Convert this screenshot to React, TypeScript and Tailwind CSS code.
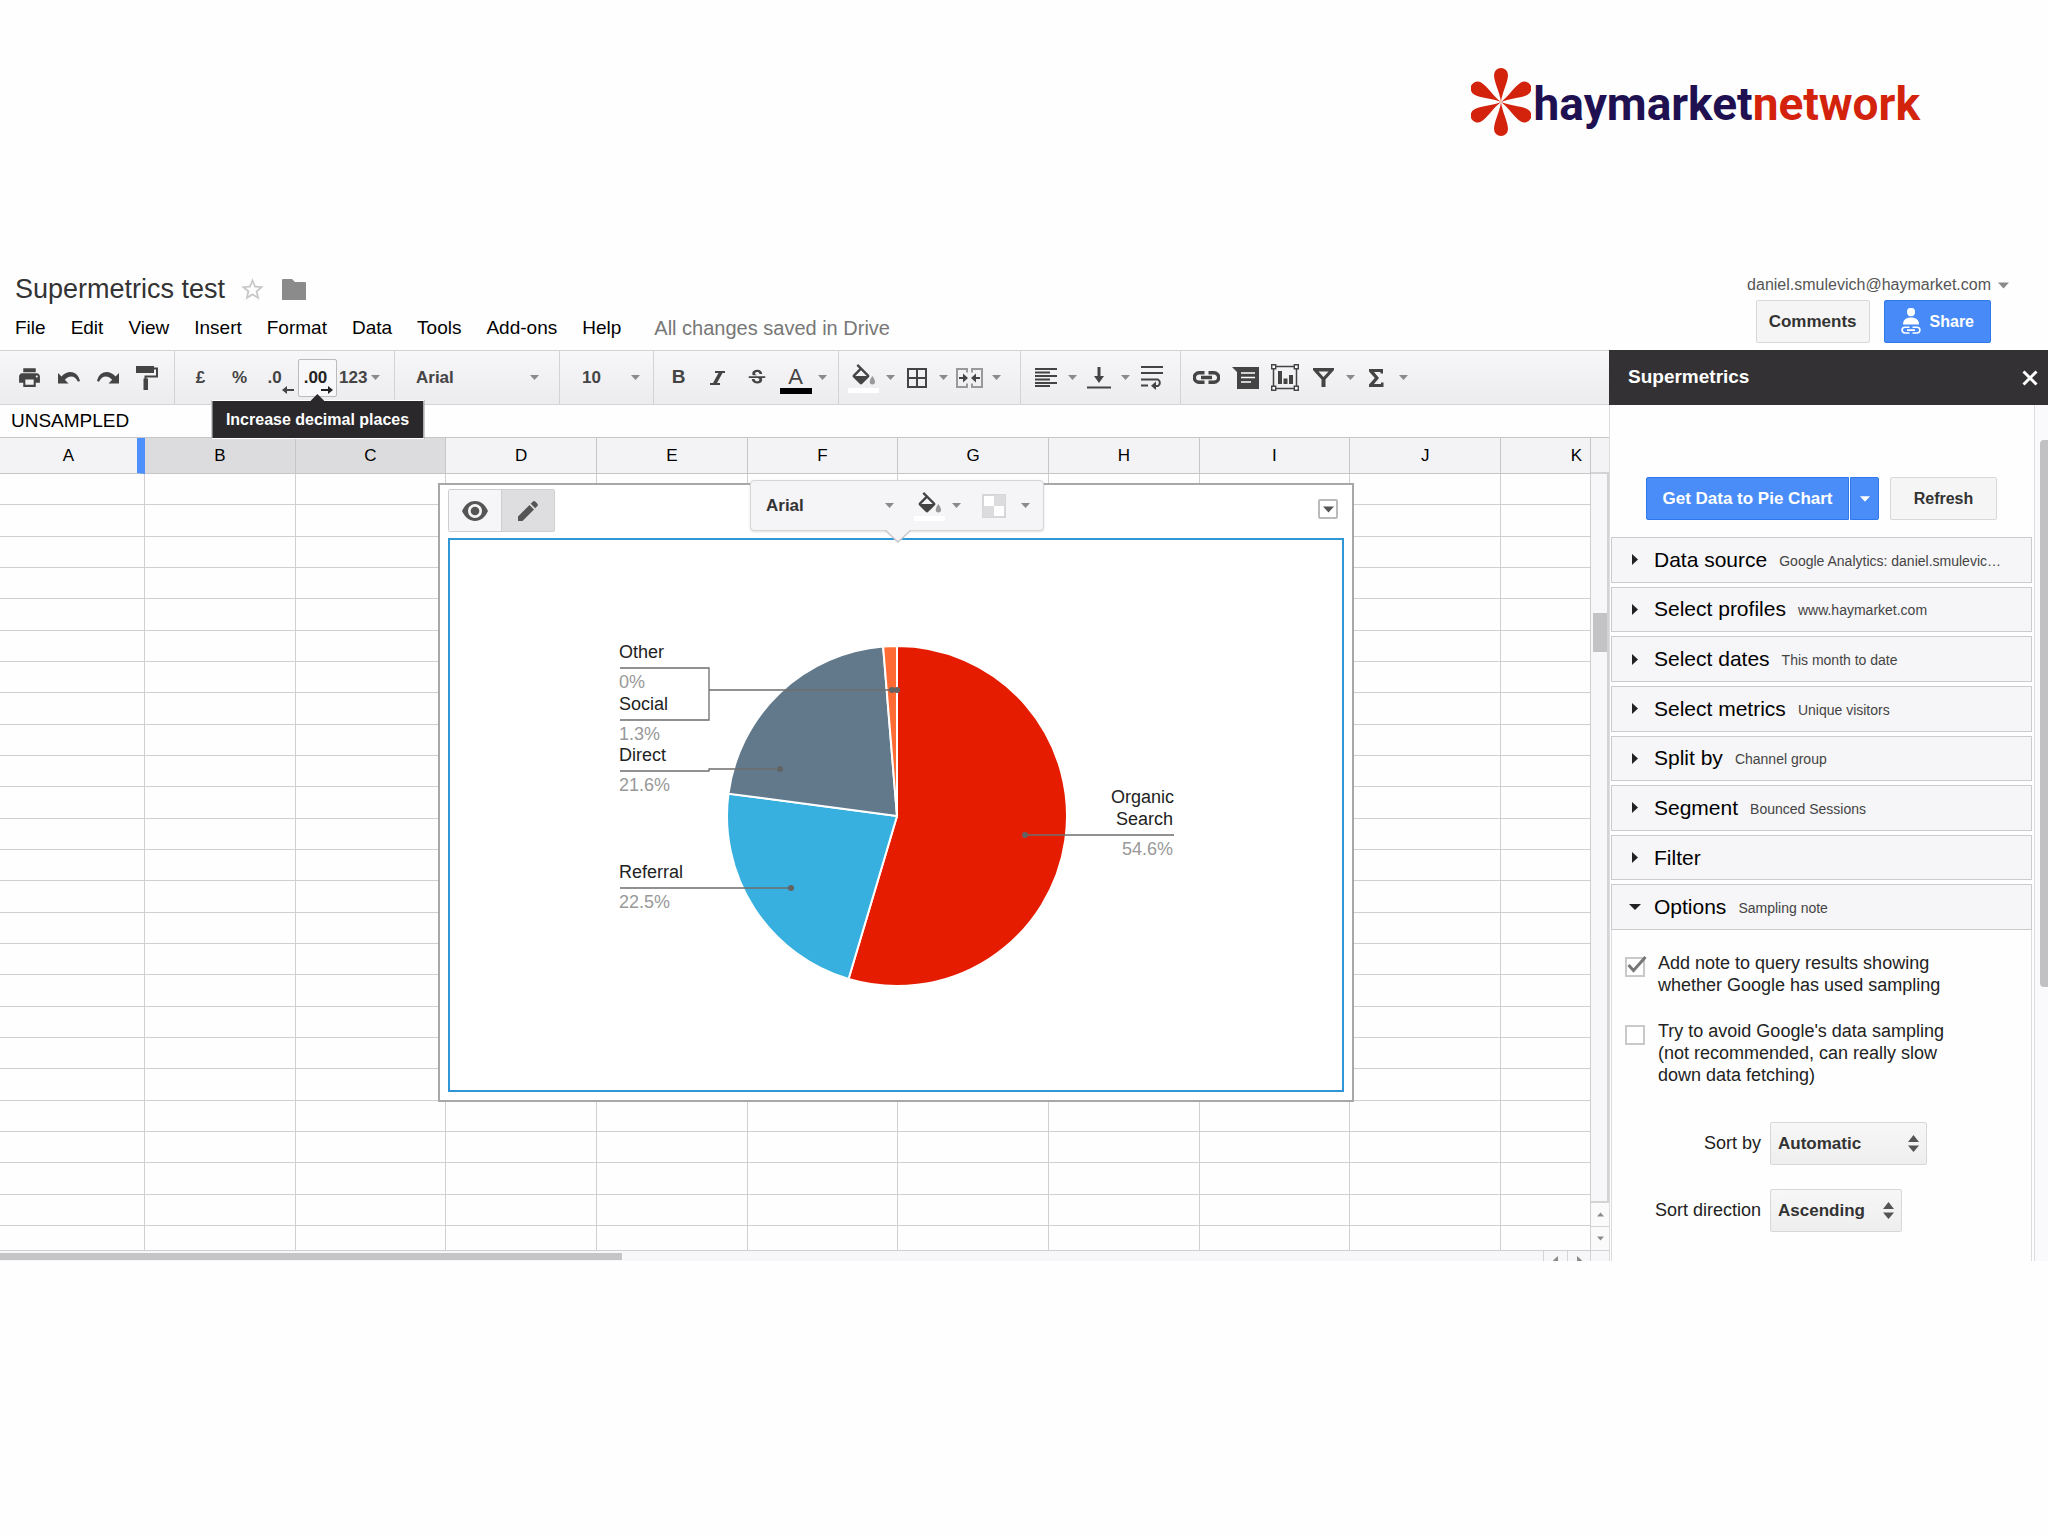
import type { ReactNode } from "react";
import { MdPrint, MdStarBorder, MdStrikethroughS } from "react-icons/md";

const MENUS = ["File", "Edit", "View", "Insert", "Format", "Data", "Tools", "Add-ons", "Help"];
const COLUMNS = ["A", "B", "C", "D", "E", "F", "G", "H", "I", "J", "K"];
const ROWS = Array.from({ length: 25 }, (_, i) => i);

const SECTIONS = [
  { title: "Data source", note: "Google Analytics: daniel.smulevic…" },
  { title: "Select profiles", note: "www.haymarket.com" },
  { title: "Select dates", note: "This month to date" },
  { title: "Select metrics", note: "Unique visitors" },
  { title: "Split by", note: "Channel group" },
  { title: "Segment", note: "Bounced Sessions" },
  { title: "Filter", note: "" },
  { title: "Options", note: "Sampling note", open: true },
];

const SLICES = [
  { name: "Organic Search", value: 54.6, color: "#e61c00" },
  { name: "Referral", value: 22.5, color: "#37b0df" },
  { name: "Direct", value: 21.6, color: "#61798b" },
  { name: "Social", value: 1.3, color: "#ff6b35" },
];

const Caret = ({ className = "text-[#8a8a8a]" }: { className?: string }) => (
  <svg className={className} width="9" height="5" viewBox="0 0 9 5" fill="currentColor">
    <path d="M0 0h9L4.500 5z" />
  </svg>
);

const Tool = ({ label, children }: { label: string; children: ReactNode }) => (
  <button aria-label={label} className="flex w-[39px] h-[38px] items-center justify-center">
    {children}
  </button>
);

const ToolCaret = ({ label }: { label: string }) => (
  <button aria-label={label} className="flex w-[14px] h-[38px] items-center justify-center">
    <Caret />
  </button>
);

const Group = ({ children, className = "pl-[5px] pr-[9px]" }: { children: ReactNode; className?: string }) => (
  <div className={`flex items-center border-r border-[#d3d2d4] ${className}`}>{children}</div>
);

const UndoIcon = ({ className = "" }: { className?: string }) => (
  <svg className={className} width="22" height="13" viewBox="0 0 22 13" fill="#444">
    <path d="M0 2l3.500 3.600C9-.800 19-1.200 22 10l-2 .800C17 4 11 4 6.800 8.800L10.500 12.500H0z" />
  </svg>
);

const RollerIcon = () => (
  <svg width="22" height="25" viewBox="0 0 22 25" fill="#444">
    <path d="M0 1h18v7H0z" />
    <path d="M18 3.500h3v8H9.500v3" fill="none" stroke="#444" strokeWidth="2" />
    <path d="M7.500 13.500h4.500V25H7.500z" />
  </svg>
);

const BucketIcon = () => (
  <svg width="32" height="30" viewBox="0 0 32 30">
    <path
      transform="translate(1 1) scale(1.200)"
      d="M16.560 8.940L7.620 0 6.210 1.410l2.380 2.380-5.150 5.150c-.590.590-.590 1.540 0 2.120l5.500 5.500c.290.290.680.440 1.060.440s.770-.150 1.060-.440l5.500-5.500c.590-.580.590-1.530 0-2.120zM5.210 10L10 5.210 14.790 10H5.210z"
      fill="#444"
    />
    <path transform="translate(1 1) scale(1.200)" d="M19.500 10s-2.200 3-2.200 4.800a2.200 2.200 0 0 0 4.400 0c0-1.800-2.200-4.800-2.200-4.800z" fill="#999" />
    <path d="M0 25h31v5H0z" fill="#fff" />
  </svg>
);

const MergeIcon = () => (
  <svg width="27" height="20" viewBox="0 0 27 20" fill="none">
    <path d="M11 4.500V1H1v18h10v-3.500M16 4.500V1h10v18H16v-3.500" stroke="#999" strokeWidth="2" />
    <path d="M3 10h5M19 10h5" stroke="#444" strokeWidth="2" />
    <path d="M7 5.500l5 4.500-5 4.500zM20 5.500L15 10l5 4.500z" fill="#444" />
  </svg>
);

const AlignIcon = () => (
  <svg width="22" height="19" viewBox="0 0 22 19" stroke="#444" strokeWidth="1.800">
    <path d="M0 1h22M0 4.500h15M0 8h22M0 11.500h15M0 15h22M0 18h15" />
  </svg>
);

const BottomIcon = () => (
  <svg width="24" height="22" viewBox="0 0 24 22">
    <path d="M10.500 0h3v9H17l-5 7-5-7h3.500zM0 19.500h24v2H0z" fill="#444" />
  </svg>
);

const WrapIcon = () => (
  <svg width="22" height="25" viewBox="0 0 22 25" fill="none" stroke="#444" strokeWidth="2">
    <path d="M0 2h22M0 8h22M0 14.500h17a3.800 3.800 0 0 1 0 6.500h-3M0 20.500h7" />
    <path d="M15 16.500v8.500l-5-4.200z" fill="#444" stroke="none" />
  </svg>
);

const LinkIcon = () => (
  <svg width="27" height="13" viewBox="0 0 27 13" fill="none" stroke="#444" strokeWidth="3.400">
    <path d="M11.500 1.800H6a4.200 4.200 0 0 0 0 9.400h5.500M15.500 1.800H21a4.200 4.200 0 0 1 0 9.400h-5.500M8 6.500h11" />
  </svg>
);

const CommentIcon = () => (
  <svg width="27" height="22" viewBox="0 0 27 22">
    <path d="M0 0h27v22H5V5z" fill="#444" />
    <path d="M9 6h14M9 10.500h14M9 15h10" stroke="#fff" strokeWidth="1.600" />
  </svg>
);

const ChartIcon = () => (
  <svg width="28" height="27" viewBox="0 0 28 27">
    <path d="M2.500 2.500h23v22h-23z" fill="none" stroke="#444" strokeWidth="1.500" />
    <path d="M.700.700h4v4h-4zM23.300.700h4v4h-4zM.700 22.300h4v4h-4zM23.300 22.300h4v4h-4z" fill="#fff" stroke="#444" strokeWidth="1.400" />
    <path d="M7 7h4v13H7zM12.500 14.500h4V20h-4zM18 11h4v9h-4z" fill="#444" />
  </svg>
);

const FilterIcon = () => (
  <svg width="21" height="19" viewBox="0 0 21 19">
    <path fillRule="evenodd" d="M0 0h21v2l-8.500 9.500V19h-4v-7.500L0 2zM5.500 3.500l5 5.500 5-5.500z" fill="#444" />
  </svg>
);

const Haymarket = () => (
  <div className="flex items-center">
    <svg width="60" height="68" viewBox="-30 -34 60 68" fill="#d3230d">
      {[0, 60, 120, 180, 240, 300].map((angle) => (
        <path key={angle} transform={`rotate(${angle})`} d="M0 0C-1-9-7-20-7-27a7 7 0 0 1 14 0C7-20 1-9 0 0z" />
      ))}
    </svg>
    <span className="pt-1 pl-[3px] font-[Roboto] text-[46px] leading-[60px] font-bold text-[#1f1151]">
      haymarket<span className="text-[#d3230d]">network</span>
    </span>
  </div>
);

const Header = () => (
  <header className="flex items-start justify-between pt-[137px] pb-[7px] pl-[15px] pr-[39px]">
    <div>
      <div className="flex items-center">
        <h1 className="text-[27px] leading-8 text-[#333]">Supermetrics test</h1>
        <button aria-label="Star" className="ml-[14px]">
          <MdStarBorder size={27} color="#c8c8c8" />
        </button>
        <button aria-label="Move to folder" className="ml-4">
          <svg width="24" height="21" viewBox="0 0 24 21" fill="#8b8b8b">
            <path d="M0 1a1 1 0 0 1 1-1h9l3 3h10a1 1 0 0 1 1 1v17H0z" />
          </svg>
        </button>
      </div>
      <nav className="mt-[11px] flex gap-[25px] text-[19px] leading-6 text-black">
        {MENUS.map((menu) => (
          <button key={menu}>{menu}</button>
        ))}
        <span className="pl-2 text-[20px] text-[#777]">All changes saved in Drive</span>
      </nav>
    </div>
    <div className="flex flex-col items-end">
      <button className="flex items-center gap-[7px] text-[16px] leading-6 text-[#555]">
        daniel.smulevich@haymarket.com
        <Caret className="w-[11px] h-[7px] text-[#8a8a8a]" />
      </button>
      <div className="mt-[3px] flex gap-[14px] pr-[18px] text-[16px] font-bold">
        <button className="h-[43px] rounded-xs border border-[#d8d8d8] bg-[#f5f5f5] px-3 text-[17px] text-[#333]">Comments</button>
        <button className="flex h-[43px] items-center gap-[9px] rounded-xs border border-[#3079ed] bg-[#488bf8] px-4 text-white">
          <svg width="20" height="27" viewBox="0 0 20 27" fill="#fff">
            <ellipse cx="10" cy="4" rx="4" ry="4.200" />
            <path d="M2 16.500c0-4.500 3-7 8-7s8 2.500 8 7z" />
            <path d="M8.500 19.200H4a2.800 2.800 0 0 0 0 5.800h4.500M11.500 19.200H16a2.800 2.800 0 0 1 0 5.800h-4.500M6 22.100h8" fill="none" stroke="#fff" strokeWidth="1.600" />
          </svg>
          Share
        </button>
      </div>
    </div>
  </header>
);

const Toolbar = () => (
  <div className="flex h-[55px] border-y border-[#d3d2d4] bg-linear-to-b from-[#f7f6f8] to-[#ecebed] text-[17px] font-bold text-[#444]">
    <Group className="pl-[10px] pr-2">
      <Tool label="Print"><MdPrint size={25} /></Tool>
      <Tool label="Undo"><UndoIcon /></Tool>
      <Tool label="Redo"><UndoIcon className="-scale-x-100" /></Tool>
      <Tool label="Paint format"><RollerIcon /></Tool>
    </Group>
    <Group className="pl-[6px] pr-[9px]">
      <Tool label="Format as currency">£</Tool>
      <Tool label="Format as percent">%</Tool>
      <Tool label="Decrease decimal places">
        <span className="relative pr-2">
          .0
          <svg className="absolute -right-1 -bottom-1" width="12" height="8" viewBox="0 0 12 8" fill="#444">
            <path d="M0 4l5-4v3h7v2H5v3z" />
          </svg>
        </span>
      </Tool>
      <div className="relative z-30">
        <button
          aria-label="Increase decimal places"
          aria-describedby="decimal-tip"
          className="flex h-[38px] w-[39px] items-center justify-center rounded-xs border border-[#bbb] bg-[#f8f7f9] text-[#222]"
        >
          <span className="relative pr-1">
            .00
            <svg className="absolute -right-[2px] -bottom-1" width="12" height="8" viewBox="0 0 12 8" fill="#222">
              <path d="M12 4L7 0v3H0v2h7v3z" />
            </svg>
          </span>
        </button>
        <div
          id="decimal-tip"
          role="tooltip"
          className="absolute top-full left-1/2 mt-[3px] -translate-x-1/2 border border-white bg-[#2a282b] px-[14px] py-[6px] text-[16px] leading-[25px] whitespace-nowrap text-white"
        >
          <svg className="absolute -top-[7px] left-1/2 -translate-x-1/2" width="14" height="7" viewBox="0 0 14 7" fill="#2a282b">
            <path d="M7 0l7 7H0z" />
          </svg>
          Increase decimal places
        </div>
      </div>
      <button className="flex w-12 items-center gap-1 pl-[2px]">
        123 <Caret />
      </button>
    </Group>
    <Group className="w-[165px]">
      <label className="relative flex w-full items-center">
        <select aria-label="Font" className="w-full appearance-none pl-[21px] outline-none">
          <option>Arial</option>
        </select>
        <Caret className="pointer-events-none absolute right-5 text-[#8a8a8a]" />
      </label>
    </Group>
    <Group className="w-[94px]">
      <label className="relative flex w-full items-center">
        <select aria-label="Font size" className="w-full appearance-none pl-[22px] outline-none">
          <option>10</option>
        </select>
        <Caret className="pointer-events-none absolute right-[13px] text-[#8a8a8a]" />
      </label>
    </Group>
    <Group>
      <Tool label="Bold"><span className="text-[19px] font-black">B</span></Tool>
      <Tool label="Italic">
        <svg width="15" height="14" viewBox="0 0 15 14" fill="#444">
          <path d="M5 0h10v2h-2.500L7 12h3v2H0v-2h3L8.500 2H5z" />
        </svg>
      </Tool>
      <Tool label="Strikethrough"><MdStrikethroughS size={22} /></Tool>
      <Tool label="Text color">
        <span className="mt-1 w-8 border-b-[6px] border-black text-[22px] leading-[22px] font-normal text-[#444]">A</span>
      </Tool>
      <ToolCaret label="More text colors" />
    </Group>
    <Group className="pl-[5px] pr-[17px]">
      <Tool label="Fill color"><BucketIcon /></Tool>
      <ToolCaret label="More fill colors" />
      <Tool label="Borders">
        <svg width="20" height="20" viewBox="0 0 20 20" fill="none" stroke="#444" strokeWidth="2">
          <path d="M1 1h18v18H1zM10 1v18M1 10h18" />
        </svg>
      </Tool>
      <ToolCaret label="Border options" />
      <Tool label="Merge cells"><MergeIcon /></Tool>
      <ToolCaret label="Merge options" />
    </Group>
    <Group>
      <Tool label="Horizontal align"><AlignIcon /></Tool>
      <ToolCaret label="Horizontal align options" />
      <Tool label="Vertical align"><BottomIcon /></Tool>
      <ToolCaret label="Vertical align options" />
      <Tool label="Wrap text"><WrapIcon /></Tool>
    </Group>
    <div className="flex items-center pl-[6px]">
      <Tool label="Insert link"><LinkIcon /></Tool>
      <Tool label="Insert comment"><CommentIcon /></Tool>
      <Tool label="Insert chart"><ChartIcon /></Tool>
      <Tool label="Filter"><FilterIcon /></Tool>
      <ToolCaret label="Filter options" />
      <Tool label="Functions">
        <svg width="15" height="18" viewBox="0 0 15 18" fill="#444">
          <path d="M0 0h14v4.500h-2.500V3H5l5 6-5 6h7v-1.500h2.500V18H0v-2.500L5.800 9 0 2.500z" />
        </svg>
      </Tool>
      <ToolCaret label="More functions" />
    </div>
  </div>
);

const point = (percent: number) => {
  const a = (percent / 100) * Math.PI * 2;
  return `${447 + 170 * Math.sin(a)} ${276 - 170 * Math.cos(a)}`;
};

const PieChart = () => {
  let start = 0;
  return (
    <svg className="mx-auto" width="892" height="550" viewBox="0 0 892 550" role="img" aria-label="Visitors by channel group">
      {SLICES.map((slice) => {
        const from = start;
        start += slice.value;
        return (
          <path
            key={slice.name}
            d={`M447 276L${point(from)}A170 170 0 ${slice.value > 50 ? 1 : 0} 1 ${point(start)}Z`}
            fill={slice.color}
            stroke="#fff"
            strokeWidth="2"
          />
        );
      })}
      <g fill="none" stroke="#6e6e6e" strokeWidth="1.300">
        <path d="M170 128h89v52h-89M259 150h188" />
        <path d="M170 231h89v-2h71M170 348h171M575 295h149" />
      </g>
      <g fill="#636363">
        <circle cx="442" cy="150" r="3" />
        <circle cx="447" cy="150" r="3" />
        <circle cx="330" cy="229" r="3" />
        <circle cx="341" cy="348" r="3" />
        <circle cx="575" cy="295" r="3" />
      </g>
      <g fontSize="18" fill="#222">
        <text x="169" y="118">Other</text>
        <text x="169" y="170">Social</text>
        <text x="169" y="221">Direct</text>
        <text x="169" y="338">Referral</text>
        <text x="724" y="263" textAnchor="end">Organic</text>
        <text x="723" y="285" textAnchor="end">Search</text>
      </g>
      <g fontSize="18" fill="#999">
        <text x="169" y="148">0%</text>
        <text x="169" y="200">1.3%</text>
        <text x="169" y="251">21.6%</text>
        <text x="169" y="368">22.5%</text>
        <text x="723" y="315" textAnchor="end">54.6%</text>
      </g>
    </svg>
  );
};

const ChartWindow = () => (
  <section className="absolute top-[45px] left-[438px] z-10 w-[916px] border-2 border-[#a8a7a9] bg-white px-2 pt-1 pb-2">
    <div className="flex items-start justify-between pb-[6px]">
      <div className="flex h-[43px] rounded-xs border border-[#cfced0]">
        <button aria-label="Preview" className="flex w-[52px] items-center justify-center bg-[#f6f5f7]">
          <svg width="26" height="20" viewBox="0 0 26 20">
            <path d="M0 10C3 3.500 7.500 0 13 0s10 3.500 13 10c-3 6.500-7.500 10-13 10S3 16.500 0 10z" fill="#555" />
            <circle cx="13" cy="10" r="7" fill="#f6f5f7" />
            <circle cx="13" cy="10" r="4.300" fill="#555" />
          </svg>
        </button>
        <button aria-label="Edit" className="flex w-[53px] items-center justify-center border-l border-[#cfced0] bg-[#dedddf]">
          <svg width="20" height="20" viewBox="0 0 20 20" fill="#555">
            <path d="M0 15.500L11.500 4l4.500 4.500L4.500 20H0zM12.700 2.800L14.700.800a2 2 0 0 1 2.800 0l1.700 1.700a2 2 0 0 1 0 2.800l-2 2z" />
          </svg>
        </button>
      </div>
      <button aria-label="Chart menu" className="mt-[10px] mr-[6px] flex h-5 w-5 items-center justify-center rounded-xs border-2 border-[#bbb]">
        <Caret className="w-[11px] h-[7px] shrink-0 text-[#555]" />
      </button>
    </div>
    <div className="border-2 border-[#2f97d8]">
      <PieChart />
    </div>
    <div className="absolute -top-[5px] left-[310px] flex h-[51px] w-[294px] items-center rounded-sm border border-[#d6d5d7] bg-[#f5f4f6] shadow">
      <label className="relative flex w-[153px] items-center text-[17px] font-bold text-[#333]">
        <select aria-label="Chart font" className="w-full appearance-none pl-[15px] outline-none">
          <option>Arial</option>
        </select>
        <Caret className="pointer-events-none absolute right-[10px] text-[#8a8a8a]" />
      </label>
      <div className="flex items-center pl-[6px]">
        <Tool label="Background color"><BucketIcon /></Tool>
        <ToolCaret label="More background colors" />
      </div>
      <div className="flex items-center pl-[11px]">
        <Tool label="Transparency">
          <svg width="24" height="24" viewBox="0 0 24 24">
            <path d="M1 1h22v22H1z" fill="#fff" stroke="#d6d5d7" strokeWidth="2" />
            <path d="M12 1h11v11H12zM1 12h11v11H1z" fill="#dcdbdd" />
          </svg>
        </Tool>
        <span className="pl-[5px]">
          <ToolCaret label="Transparency options" />
        </span>
      </div>
      <svg className="absolute top-[49px] left-[134px]" width="26" height="13" viewBox="0 0 26 13">
        <path d="M0 0l13 12L26 0z" fill="#f5f4f6" />
        <path d="M0 0l13 12L26 0" fill="none" stroke="#c9c8ca" strokeWidth="1.500" />
      </svg>
    </div>
  </section>
);

const Sheet = () => (
  <div className="relative">
    <div className="flex">
      <table className="w-full flex-1 table-fixed border-separate border-spacing-0">
        <colgroup>
          {COLUMNS.map((col) => (
            <col key={col} className={col === "A" ? "w-[145px]" : col === "K" ? "w-[90px]" : ""} />
          ))}
        </colgroup>
        <thead>
          <tr className="h-9 text-[17px]">
            {COLUMNS.map((col) => (
              <th
                key={col}
                scope="col"
                className={`border-b border-[#c6c5c7] p-0 font-normal ${col === "B" || col === "C" ? "bg-[#dcdbdd]" : "bg-[#f3f2f4]"} ${col === "A" ? "border-r-8 border-r-[#4d90fe]" : "border-r"} ${col === "K" ? "pr-2 text-right" : ""}`}
              >
                {col}
              </th>
            ))}
          </tr>
        </thead>
        <tbody>
          {ROWS.map((row) => (
            <tr key={row} className={row === 24 ? "h-[25px]" : row % 3 === 1 ? "h-8" : "h-[31px]"}>
              {COLUMNS.map((col) => (
                <td key={col} className="border-r border-b border-[#d0cfd1] p-0" />
              ))}
            </tr>
          ))}
        </tbody>
      </table>
      <div className="flex w-[18px] flex-col">
        <div className="h-9 border-b-2 border-[#d3d2d4] bg-[#f3f2f4]" />
        <div className="flex-1 border-r-2 border-b-2 border-[#d3d2d4] bg-[#f7f6f9] pt-[139px] pl-[2px]">
          <div className="h-[39px] bg-[#c3c2c4]" />
        </div>
        <button aria-label="Scroll up" className="flex h-6 items-center justify-center border-b border-[#d3d2d4] bg-[#fafafb]">
          <Caret className="w-[7px] rotate-180 text-[#8a8a8a]" />
        </button>
        <button aria-label="Scroll down" className="flex h-6 items-center justify-center border-b border-[#d3d2d4] bg-[#fafafb]">
          <Caret className="w-[7px] text-[#8a8a8a]" />
        </button>
      </div>
    </div>
    <div className="flex h-[10px] items-start overflow-hidden bg-[#f7f6f9] pr-[18px]">
      <div className="mt-[2px] h-[7px] w-[622px] bg-[#c5c4c6]" />
      <button aria-label="Scroll left" className="ml-auto flex h-6 w-6 shrink-0 justify-center border-l border-[#d3d2d4] pt-[7px]">
        <Caret className="w-[9px] rotate-90 text-[#8a8a8a]" />
      </button>
      <button aria-label="Scroll right" className="flex h-6 w-6 shrink-0 justify-center border-x border-[#d3d2d4] pt-[7px]">
        <Caret className="w-[9px] -rotate-90 text-[#8a8a8a]" />
      </button>
    </div>
    <ChartWindow />
  </div>
);

const SortSelect = ({ id, label, value, width }: { id: string; label: string; value: string; width: string }) => (
  <div className="flex items-center">
    <label htmlFor={id} className="w-[149px] pr-[9px] text-right text-[18px] text-[#222]">
      {label}
    </label>
    <div className={`relative flex items-center ${width}`}>
      <select
        id={id}
        className="h-[43px] w-full appearance-none rounded-xs border border-[#d8d8d8] bg-linear-to-b from-[#f7f7f7] to-[#efeeef] pl-[7px] text-[17px] font-bold text-[#333] outline-none"
      >
        <option>{value}</option>
      </select>
      <svg className="pointer-events-none absolute right-2" width="11" height="17" viewBox="0 0 11 17" fill="#555">
        <path d="M5.500 0L11 7H0zM0 10.500h11L5.500 17z" />
      </svg>
    </div>
  </div>
);

const CheckRow = ({ checked, children }: { checked?: boolean; children: ReactNode }) => (
  <label className="flex items-start text-[18px] leading-[22px] text-[#222]">
    <span className="relative mt-[5px] mr-[13px] h-5 w-5 shrink-0">
      <input type="checkbox" defaultChecked={checked} className="peer block h-5 w-5 appearance-none border-2 border-[#c9c9c9] bg-white" />
      <svg className="absolute -top-[1px] left-[2px] hidden peer-checked:block" width="20" height="17" viewBox="0 0 20 17" fill="none">
        <path d="M1.500 9l5 5.500L18.500 1" stroke="#777" strokeWidth="3" />
      </svg>
    </span>
    <span className="w-[240px] grow">{children}</span>
  </label>
);

const Sidebar = () => (
  <aside className="flex w-[439px] shrink-0 flex-col">
    <div className="flex h-[55px] items-center justify-between bg-[#333133] pr-[10px] pl-[19px] text-white">
      <h2 className="text-[19px] font-bold">Supermetrics</h2>
      <button aria-label="Close">
        <svg width="16" height="16" viewBox="0 0 16 16" stroke="#fff" strokeWidth="3">
          <path d="M1.500 1.500l13 13M14.500 1.500l-13 13" />
        </svg>
      </button>
    </div>
    <div className="flex flex-1">
      <div className="flex flex-1 flex-col border-l border-[#dddcde] pr-[2px] pl-px">
        <div className="flex px-[35px] pt-[72px] pb-[17px] text-[16px] font-bold">
          <button className="h-[43px] w-[203px] rounded-l-xs border border-[#3079ed] bg-[#4a8df9] text-[17px] text-white">Get Data to Pie Chart</button>
          <button aria-label="More data actions" className="ml-px flex h-[43px] w-[29px] items-center justify-center rounded-r-xs border border-[#3079ed] bg-[#4a8df9]">
            <Caret className="w-[10px] h-[6px] text-white" />
          </button>
          <button className="ml-[11px] h-[43px] w-[107px] rounded-xs border border-[#d8d8d8] bg-[#f5f5f5] text-[#333]">Refresh</button>
        </div>
        <div className="grid h-[393px] auto-rows-fr gap-1">
          {SECTIONS.map(({ title, note, open }) => (
            <button key={title} aria-expanded={!!open} className="flex items-center border border-[#cbcacc] bg-[#f6f5f7] pl-[17px] text-left">
              <span className="flex w-[25px] items-center">
                {open ? (
                  <svg width="12" height="6" viewBox="0 0 12 6"><path d="M0 0h12L6 6z" fill="#222" /></svg>
                ) : (
                  <svg className="ml-[3px]" width="6" height="11" viewBox="0 0 6 11"><path d="M0 0l6 5.500L0 11z" fill="#222" /></svg>
                )}
              </span>
              <span className="text-[21px] leading-6 text-black">{title}</span>
              <span className="mt-[3px] ml-3 text-[14px] text-[#444]">{note}</span>
            </button>
          ))}
        </div>
        <div className="flex-1 border-x border-[#dddcde] px-[13px] pt-[22px] pb-7">
          <CheckRow checked>
            Add note to query results showing
            <br />
            whether Google has used sampling
          </CheckRow>
          <div className="h-6" />
          <CheckRow>
            Try to avoid Google's data sampling
            <br />
            (not recommended, can really slow
            <br />
            down data fetching)
          </CheckRow>
          <div className="mt-9 flex flex-col gap-6 -ml-1">
            <SortSelect id="sort-by" label="Sort by" value="Automatic" width="w-[157px]" />
            <SortSelect id="sort-direction" label="Sort direction" value="Ascending" width="w-[132px]" />
          </div>
        </div>
      </div>
      <div className="w-[14px] border-l border-[#dddcde] bg-[#faf9fb] pt-[35px] pl-[5px]">
        <div className="h-[547px] rounded-l-sm bg-[#c1c0c2]" />
      </div>
    </div>
  </aside>
);

export default function App() {
  return (
    <main className="min-h-screen bg-[#fefefe] font-['Liberation_Sans',Arial,sans-serif] text-black">
      <div className="flex justify-end pt-[68px] pr-32">
        <Haymarket />
      </div>
      <Header />
      <div className="flex">
        <div className="min-w-0 flex-1">
          <Toolbar />
          <div className="h-[33px] border-b border-[#c6c5c7] pl-[11px] text-[19px] leading-[31px]">UNSAMPLED</div>
          <Sheet />
        </div>
        <Sidebar />
      </div>
    </main>
  );
}
